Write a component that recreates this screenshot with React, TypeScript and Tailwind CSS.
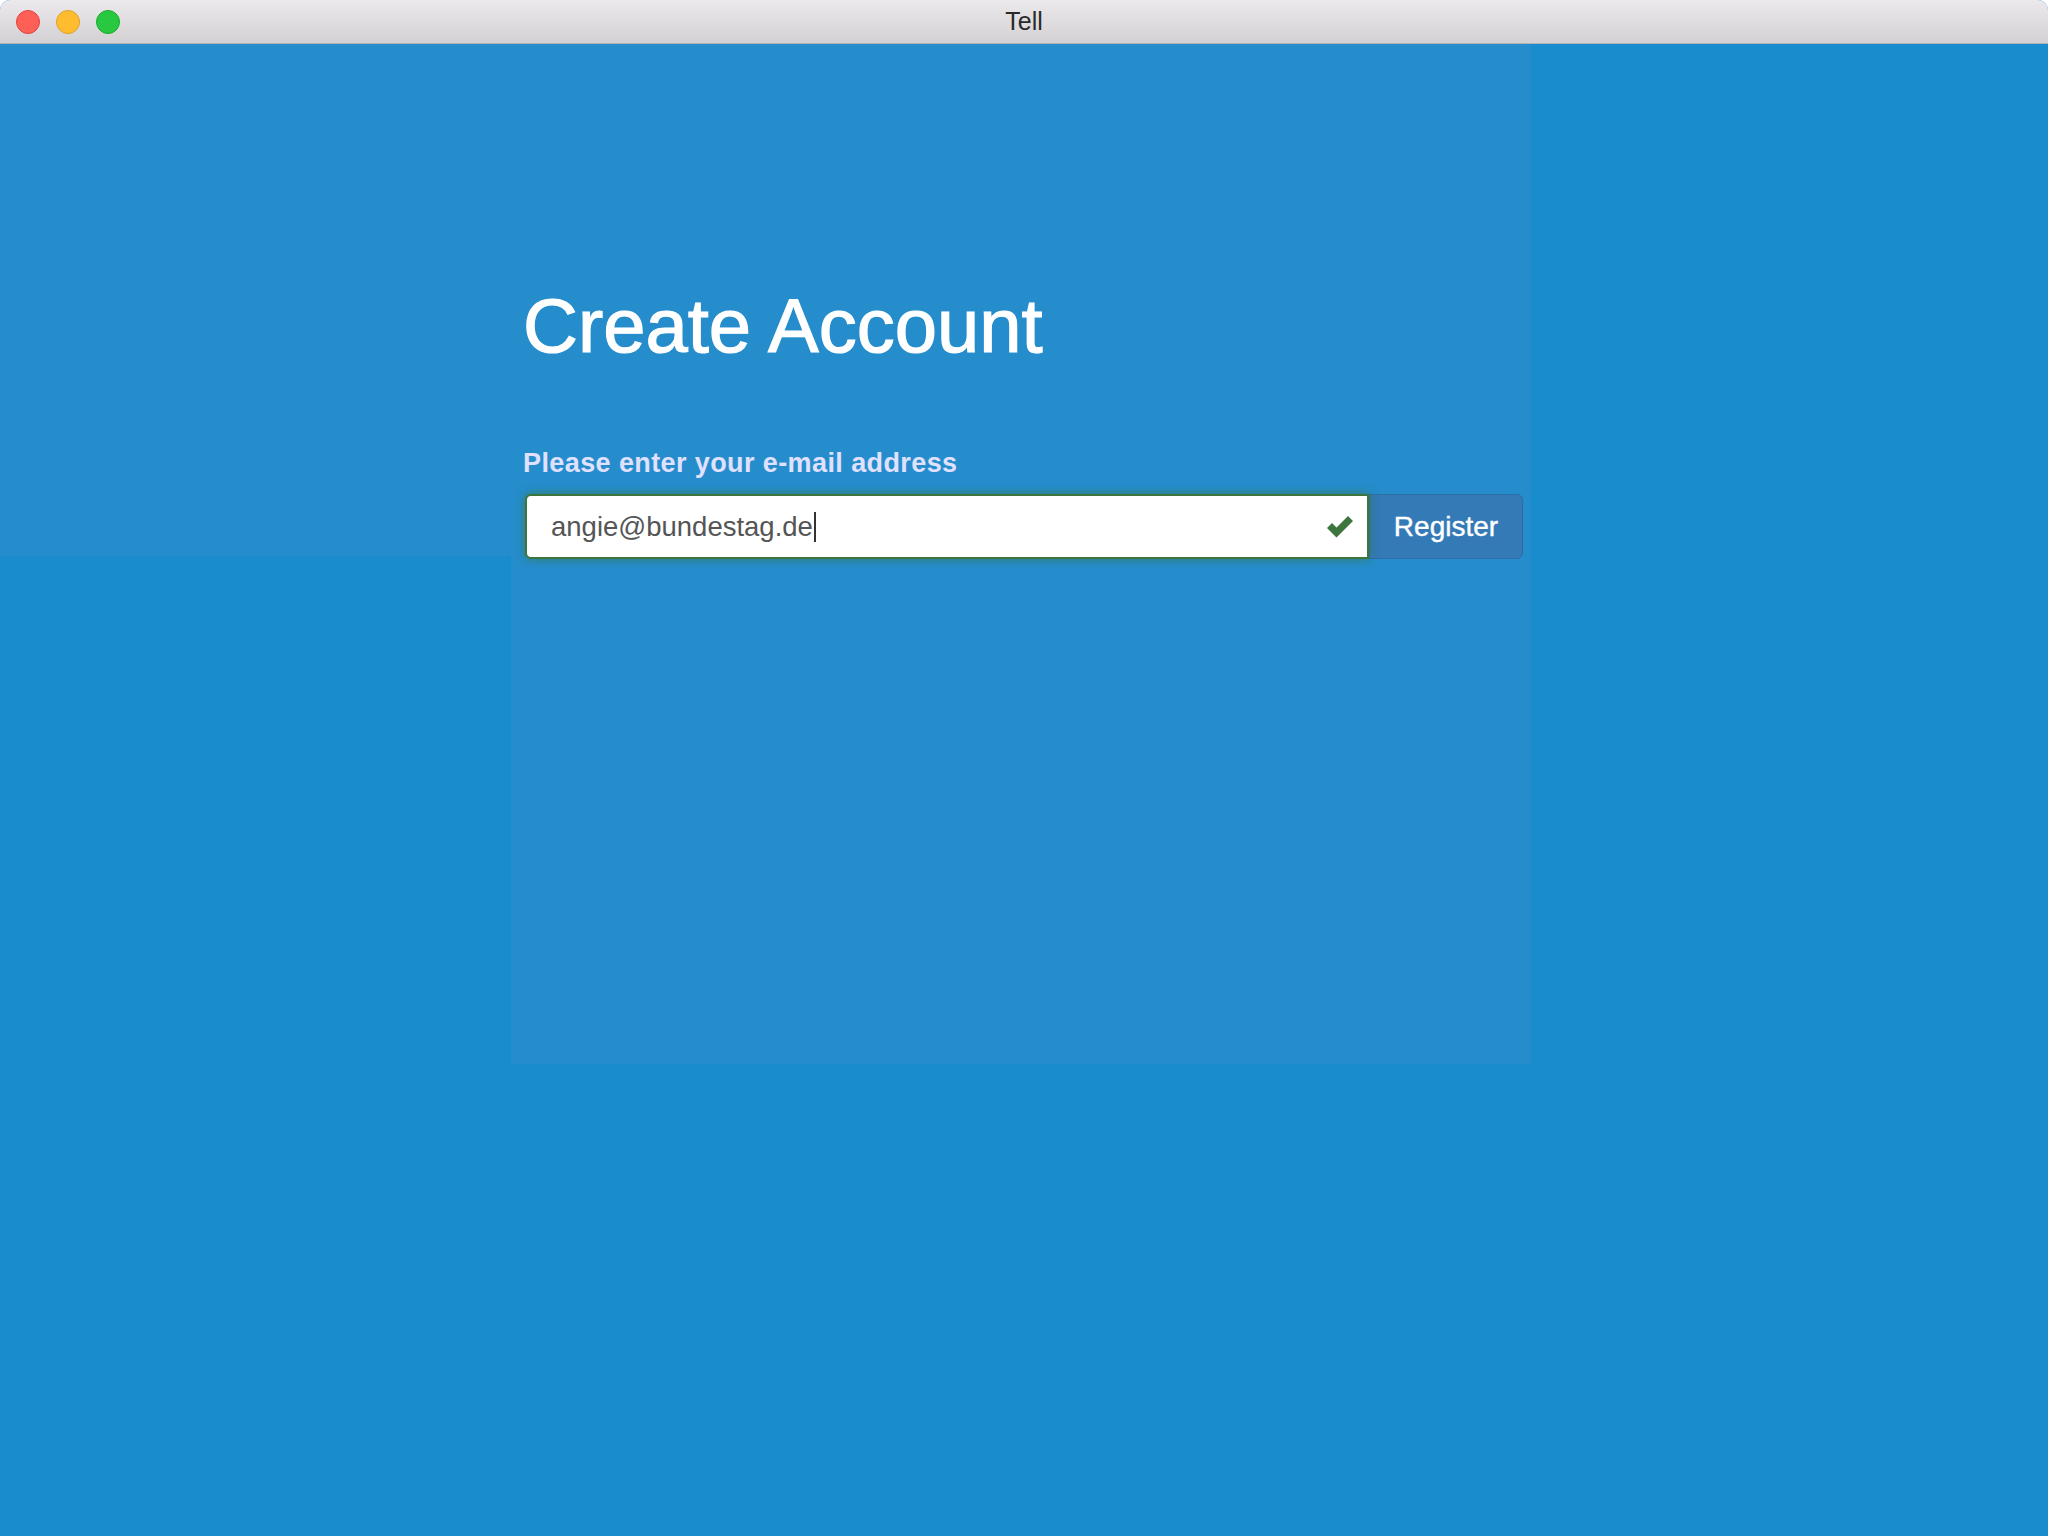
import React from "react";

export default function App() {
  return (
    <div className="w-[2048px] h-[1536px] bg-white overflow-hidden" style={{ fontFamily: '"Liberation Sans", Arial, sans-serif' }}>
      <div className="w-full h-full rounded-t-[10px] overflow-hidden flex flex-col bg-[#188ccc]">
        {/* Title bar */}
        <div className="h-[44px] shrink-0 relative flex items-center justify-center bg-gradient-to-b from-[#ebe9eb] to-[#d3d1d3] border-b border-[#b3b1b3]">
          <div className="absolute left-[16px] top-[10px] flex gap-[16px]">
            <div className="w-[24px] h-[24px] rounded-full bg-[#fe5f57] border border-[#e0443e]" />
            <div className="w-[24px] h-[24px] rounded-full bg-[#febc2e] border border-[#dea123]" />
            <div className="w-[24px] h-[24px] rounded-full bg-[#28c840] border border-[#1aab29]" />
          </div>
          <span className="text-[25px] text-[#2a2a2a] leading-none">Tell</span>
        </div>
        {/* Body */}
        <div className="flex-1 flex">
          <div className="w-[511px] shrink-0">
            <div className="h-[512px] bg-[#258dcc]" />
          </div>
          <div className="w-[1020px] shrink-0">
            <div className="h-[1020px] bg-[#258dcc] pl-[12px] pt-[244px]">
              <h1 className="text-[76px] leading-none text-white m-0 [-webkit-text-stroke:1.2px_white]">Create Account</h1>
              <div className="mt-[86px] text-[27px] leading-none font-bold text-[#e0e0ff] tracking-[0.4px]">Please enter your e-mail address</div>
              <div className="mt-[17px] ml-[2px] flex h-[65px]">
                <div className="w-[844px] h-full relative bg-white border-2 border-[#3c763d] rounded-l-[6px] shadow-[0_0_10px_rgba(60,118,61,0.75)] flex items-center pl-[24px]">
                  <span className="text-[27.5px] text-[#555555] leading-none">angie@bundestag.de</span>
                  <span className="inline-block w-[2px] h-[30px] bg-[#333] ml-[1px]" />
                  <svg className="absolute right-[12px] top-[19px]" width="30" height="24" viewBox="0 0 30 24">
                    <path d="M2 13 L7 8 L11.5 12.5 L23 1 L28 6 L11.5 22.5 Z" fill="#3c763d" />
                  </svg>
                </div>
                <div className="w-[154px] h-full bg-[#337ab7] border border-[#2e6da4] rounded-r-[6px] flex items-center justify-center">
                  <span className="text-[28px] text-white leading-none [-webkit-text-stroke:0.4px_white]">Register</span>
                </div>
              </div>
            </div>
          </div>
          <div className="flex-1" />
        </div>
      </div>
    </div>
  );
}
